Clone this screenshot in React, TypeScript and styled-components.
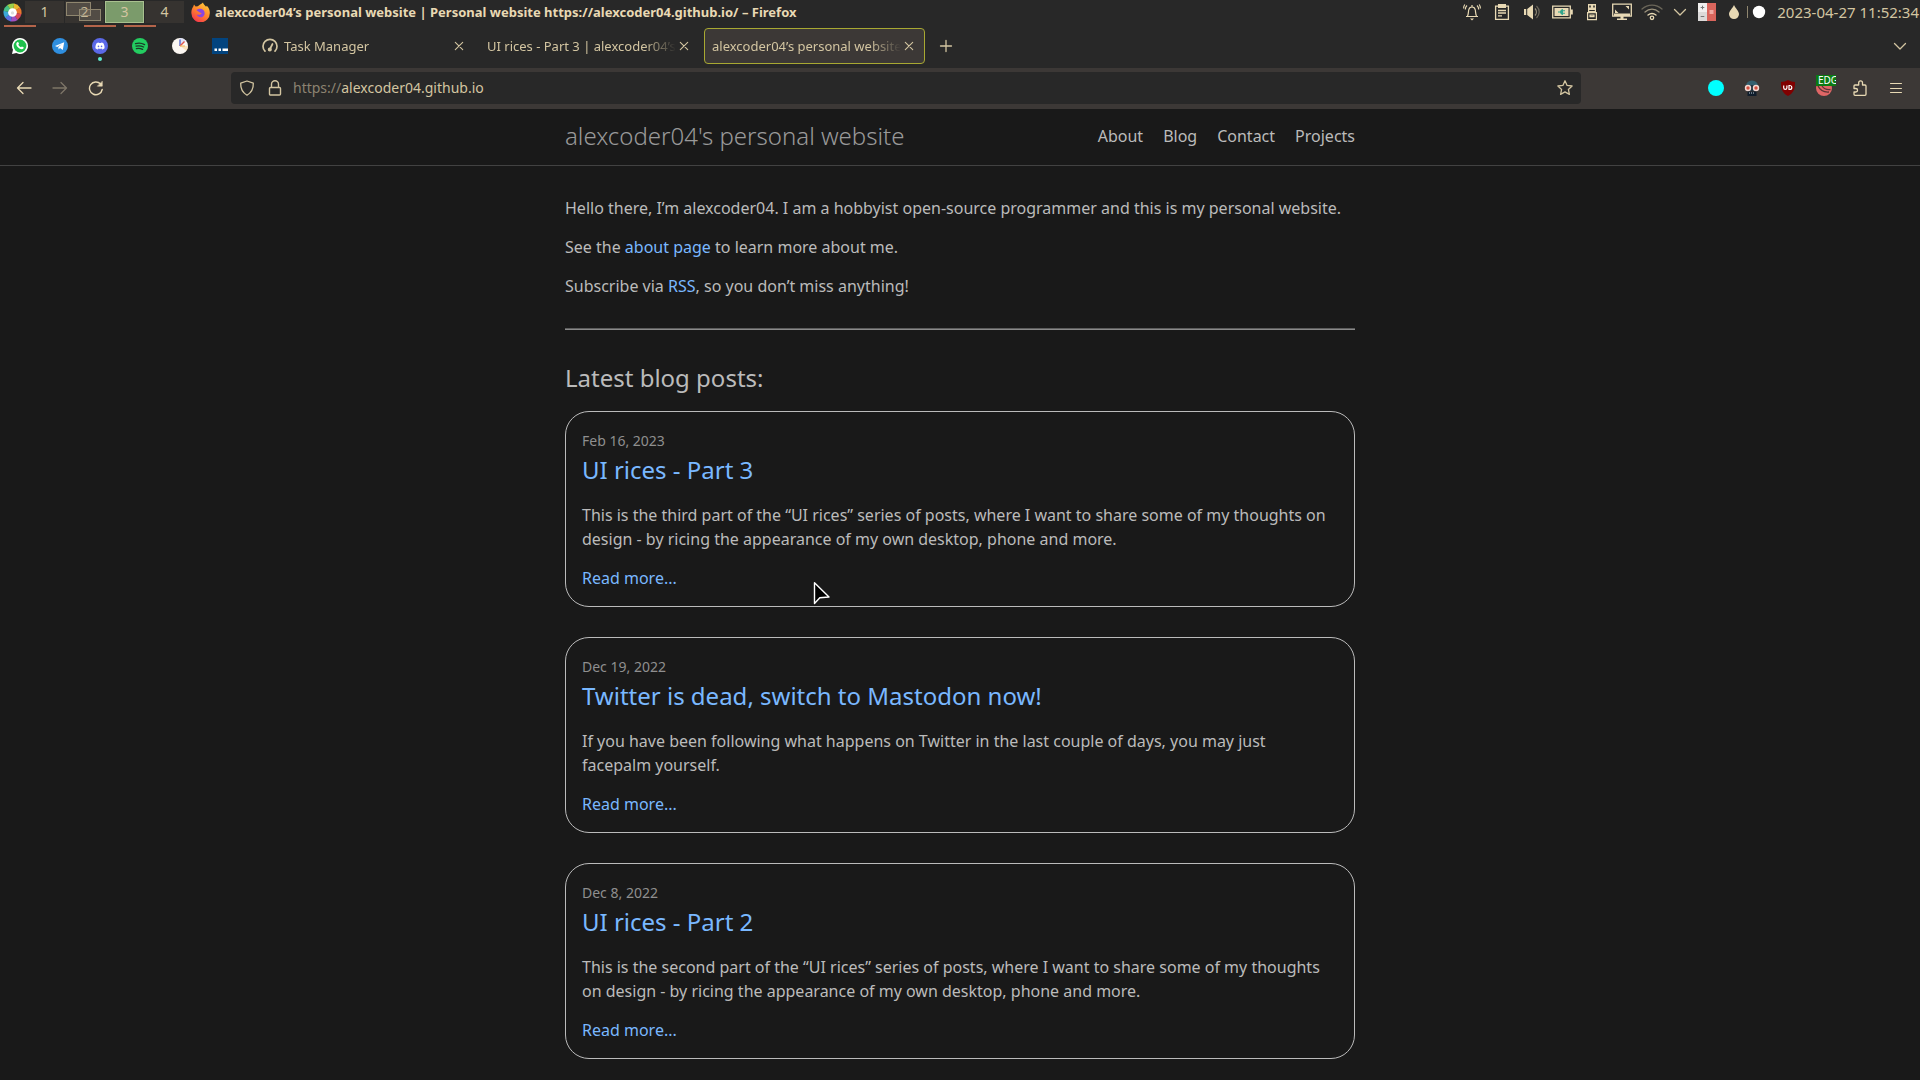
import React from "react";
import styled, { createGlobalStyle } from "styled-components";
import { FaDiscord } from "react-icons/fa";

const cream = "#e8d9b4";
const creamDim = "#d3c5a1";
const bar = "#282828";
const toolbar = "#3c3836";
const pageBg = "#191919";
const sans = `"Noto Sans", "Open Sans", sans-serif`;

const GlobalStyle = createGlobalStyle`
  *, *::before, *::after { box-sizing: border-box; }
  body { margin: 0; background: ${pageBg}; font-family: ${sans}; }
  button { font: inherit; color: inherit; background: none; border: 0; padding: 0; }
  svg { display: block; }
`;

const Desktop = styled.div`
  position: relative;
  display: flex;
  flex-direction: column;
  min-height: 100vh;
  overflow: hidden;
`;

/* ---------- desktop panel ---------- */
const Panel = styled.header`
  display: flex;
  align-items: center;
  height: 24px;
  background: ${bar};
  color: ${creamDim};
`;
const Launcher = styled.button`
  width: 25px;
  padding-left: 3px;
`;
const Pager = styled.nav`
  display: flex;
  gap: 1px;
`;
const Workspace = styled.button<{ $active?: boolean }>`
  position: relative;
  width: 39px;
  height: 22px;
  background: ${(p) => (p.$active ? "#7b9b6b" : "#363330")};
  box-shadow: ${(p) => (p.$active ? "inset 0 0 0 1px #a9c08f" : "none")};
  color: ${creamDim};
  font-size: 14px;
  line-height: 22px;
`;
const MiniWindow = styled.span<{ $x: number; $y: number; $w: number; $h: number }>`
  position: absolute;
  left: ${(p) => p.$x}px;
  top: ${(p) => p.$y}px;
  width: ${(p) => p.$w}px;
  height: ${(p) => p.$h}px;
  border: 1px solid #8f866f;
  background: rgba(168, 153, 132, 0.25);
`;
const ActiveWindow = styled.div`
  display: flex;
  flex: 1;
  align-items: center;
  gap: 5px;
  min-width: 0;
  padding-left: 7px;
  color: ${cream};
  font-size: 13px;
  font-weight: 700;
  white-space: nowrap;
`;
const Tray = styled.div`
  display: flex;
  align-items: center;
`;
const TrayButton = styled.button<{ $w?: number }>`
  display: flex;
  justify-content: center;
  width: ${(p) => p.$w ?? 30}px;
`;
const Divider = styled.span`
  width: 1px;
  height: 12px;
  background: #8f866f;
`;
const Clock = styled.time`
  width: 150px;
  padding-right: 1px;
  font-size: 15px;
  line-height: 24px;
  text-align: right;
  white-space: nowrap;
`;

/* ---------- browser tabs ---------- */
const TabStrip = styled.div`
  display: flex;
  align-items: stretch;
  height: 44px;
  background: ${bar};
  color: ${creamDim};
`;
const PinnedTabs = styled.div`
  display: flex;
  margin-right: 12px;
`;
const PinnedTab = styled.button<{ $container?: boolean }>`
  position: relative;
  display: flex;
  align-items: center;
  justify-content: center;
  width: 40px;
  &::before {
    content: "";
    position: absolute;
    top: 1px;
    left: 4px;
    right: 4px;
    height: 2px;
    background: ${(p) => (p.$container ? "#b4644a" : "transparent")};
  }
`;
const Notice = styled.span`
  position: absolute;
  bottom: 7px;
  left: 18px;
  width: 4px;
  height: 4px;
  border-radius: 2px;
  background: #5eead0;
`;
const Tab = styled.div<{ $active?: boolean }>`
  display: flex;
  align-items: center;
  width: 221px;
  margin: 4px 2px;
  padding: 0 7px;
  border: 1px solid ${(p) => (p.$active ? "#a8a832" : "transparent")};
  border-radius: 4px;
  background: ${(p) => (p.$active ? toolbar : "transparent")};
`;
const TabIcon = styled.span`
  width: 22px;
`;
const TabTitle = styled.button`
  flex: 1;
  min-width: 0;
  overflow: hidden;
  text-align: left;
  white-space: nowrap;
  font-size: 13px;
  line-height: 20px;
  mask-image: linear-gradient(to left, transparent, black 32px);
`;
const IconButton = styled.button<{ $w?: number }>`
  display: flex;
  align-items: center;
  justify-content: center;
  width: ${(p) => p.$w ?? 16}px;
`;
const Spacer = styled.span`
  flex: 1;
`;

/* ---------- navigation toolbar ---------- */
const NavBar = styled.div`
  display: flex;
  align-items: center;
  height: 41px;
  padding: 0 6px 1px;
  background: ${toolbar};
  color: ${cream};
`;
const NavSide = styled.div<{ $end?: boolean }>`
  display: flex;
  flex: ${(p) => (p.$end ? "0 0 333px" : "0 0 225px")};
  justify-content: ${(p) => (p.$end ? "flex-end" : "flex-start")};
`;
const UrlBar = styled.div`
  display: flex;
  flex: 1;
  align-items: center;
  height: 32px;
  padding-left: 2px;
  border-radius: 4px;
  background: ${bar};
  color: ${creamDim};
`;
const UrlField = styled.label`
  position: relative;
  flex: 1;
  margin-left: 4px;
  font-size: 14px;
  line-height: 24px;
`;
const UrlInput = styled.input`
  display: block;
  width: 100%;
  padding: 0;
  border: 0;
  outline: 0;
  background: none;
  color: transparent;
  font: inherit;
`;
const UrlText = styled.span`
  position: absolute;
  inset: 0;
  pointer-events: none;
`;
const Scheme = styled.span`
  color: #8c8371;
`;
const AddonBadge = styled.span`
  position: absolute;
  top: -5px;
  left: 0;
  width: 20px;
  height: 11px;
  overflow: hidden;
  padding-left: 2px;
  background: #0b7a12;
  color: #fff;
  font-size: 10px;
  line-height: 11px;
  text-align: left;
`;
const AddonWrap = styled.span`
  position: relative;
  width: 16px;
`;

/* ---------- web page ---------- */
const Page = styled.div`
  flex: 1;
  background: ${pageBg};
  color: #bbb;
  font-size: 16px;
  line-height: 24px;
`;
const SiteHeader = styled.header`
  border-bottom: 1px solid #424242;
`;
const Wrapper = styled.div`
  width: 100%;
  max-width: 850px;
  margin: 0 auto;
  padding: 0 30px;
`;
const HeaderRow = styled(Wrapper)`
  display: flex;
  align-items: center;
  justify-content: space-between;
  height: 56px;
  padding-bottom: 2px;
`;
const SiteTitle = styled.a`
  color: #999;
  font-size: 24px;
  font-weight: 300;
  line-height: 54px;
  text-decoration: none;
`;
const SiteNav = styled.nav`
  display: flex;
  gap: 20px;
  a { color: #bbb; text-decoration: none; }
`;
const Content = styled(Wrapper)`
  padding-top: 30px;
`;
const Para = styled.p`
  margin: 0 0 15px;
`;
const Link = styled.a`
  color: #79b8ff;
  text-decoration: none;
`;
const Rule = styled.hr`
  height: 2px;
  margin: 30px 0;
  border: 0;
  background: linear-gradient(#5c5c5c 50%, #8a8a8a 50%);
`;
const Heading = styled.h2`
  margin: 0 0 15px;
  font-size: 24px;
  font-weight: 400;
  line-height: 36px;
`;
const Posts = styled.ul`
  display: flex;
  flex-direction: column;
  gap: 30px;
  margin: 0;
  padding: 0;
  list-style: none;
`;
const Card = styled.li`
  padding: 16px;
  border: 1px solid #bbb;
  border-radius: 24px;
`;
const PostMeta = styled.div`
  color: #8f8f8f;
  time { font-size: 14px; line-height: 16px; }
`;
const PostTitle = styled.h3`
  margin: 0 0 15px;
  font-size: 24px;
  font-weight: 400;
  line-height: 36px;
`;
const Cursor = styled.svg`
  position: absolute;
  left: 813px;
  top: 581px;
`;

/* ---------- icons ---------- */
type IconProps = { size?: number; children: React.ReactNode; width?: number };
const Line = ({ size = 16, children, width = 1.3 }: IconProps) => (
  <svg width={size} height={size} viewBox="0 0 16 16" fill="none" stroke="currentColor"
    strokeWidth={width} strokeLinecap="round" strokeLinejoin="round" aria-hidden="true">
    {children}
  </svg>
);
const Close = () => <Line size={16} width={1.1}><path d="M4.3 4.3l7.4 7.4M11.7 4.3l-7.4 7.4" /></Line>;
const Chevron = () => <Line><path d="M2.5 5.5L8 11l5.5-5.500" /></Line>;

const LauncherIcon = () => {
  const colors = ["#e8b52f", "#e9772d", "#d9465b", "#a24fc0", "#5a6fe0", "#3aa8d8", "#46bf86", "#9ccf4a"];
  return (
    <svg width="19" height="19" viewBox="-10 -10 20 20" aria-hidden="true">
      {colors.map((c, i) => (
        <path key={c} d="M0 0L0-9.5A9.5 9.5 0 0 1 6.9-6.6Z" fill={c} transform={`rotate(${i * 45 + 10})`} />
      ))}
      <circle r="4.6" fill="#fff" />
      <circle r="1.7" cy="0.5" fill="#ddd" />
    </svg>
  );
};
const FirefoxIcon = () => (
  <svg width="19" height="20" viewBox="0 0 19 20" aria-hidden="true">
    <defs>
      <linearGradient id="fox" x1="0.8" y1="0" x2="0.2" y2="1">
        <stop offset="0" stopColor="#ffcf3d" />
        <stop offset="0.45" stopColor="#ff8a2b" />
        <stop offset="1" stopColor="#f5304e" />
      </linearGradient>
    </defs>
    <path d="M12 .5c.3 2 2 2.700 3.100 4.200l.7-.9C18 5.800 18.900 8.300 18.800 11A9.200 9.200 0 0 1 .4 11.300C.2 8.500 1 6.300 2.300 4.500l.7-2 1.600 2 2.200-.2C8 3 10 2.300 12 .5z" fill="url(#fox)" />
    <path d="M5.500 8.200C7 6.800 10 6 12.500 8.300c1.800 2 1.400 5.200-.7 6.400-2.400 1.300-5.300.2-6-2l3 .1 2-1.300-2.400-1.200z" fill="#8a45e0" />
  </svg>
);

const TrayIcons = {
  bell: (
    <svg width="18" height="18" viewBox="0 0 18 18" fill="none" stroke={cream} strokeWidth="1.200">
      <path d="M3 13.500h12M4.500 13c1-1.500.8-4 1.200-6C6.100 5 7.300 4 9 4s2.900 1 3.300 3c.4 2 .2 4.500 1.200 6M9 2v2M4 2.500C2.800 3.500 2.300 5 2.300 6.500M1.800 1.500C.8 2.800.6 4 .6 5.500M14 2.500c1.200 1 1.700 2.500 1.700 4M16.200 1.500c1 1.300 1.200 2.500 1.200 4" />
      <path d="M7 15.500h4L9 17.500z" fill={cream} stroke="none" />
    </svg>
  ),
  clipboard: (
    <svg width="16" height="18" viewBox="0 0 16 18" fill="none" stroke={cream} strokeWidth="1.300">
      <path d="M4 3.200H1.600v13.200h12.800V3.200H12M4 7.500h8M4 10h8M4 12.800h4" />
      <path d="M4 1h8v4H4z" fill={cream} stroke="none" />
    </svg>
  ),
  volume: (
    <svg width="18" height="18" viewBox="0 0 18 18" fill="none">
      <path d="M1 6h2.200v6H1zM4.200 6L10 1.500v15L4.200 12z" fill={cream} />
      <path d="M12 5.500c1.800 2 1.800 5 0 7" stroke={cream} strokeWidth="1.200" opacity=".6" />
      <path d="M13.500 3c3.600 3.500 3.600 8.500 0 12" stroke={cream} strokeWidth="1.200" opacity=".35" />
    </svg>
  ),
  battery: (
    <svg width="21" height="14" viewBox="0 0 21 14">
      <path d="M.7 1.200h17.600v11.600H.7z" fill="none" stroke={cream} strokeWidth="1.300" />
      <path d="M2.500 3h14v8h-14z" fill={cream} />
      <path d="M19 4.500h1.800v5H19z" fill={cream} />
      <path d="M6 6.400h2C8.500 5 9.500 4.200 11 4v1.300h2v1h-2v1.400h2v1h-2V10C9.500 9.800 8.500 9 8 7.600H6z" fill="#2fa58c" />
    </svg>
  ),
  usb: (
    <svg width="12" height="18" viewBox="0 0 12 18" fill="none" stroke={cream} strokeWidth="1.200">
      <path d="M2 1h8v6H2z" fill={cream} stroke="none" />
      <path d="M4 2.500v2M8 2.500v2" stroke={bar} strokeWidth="1.500" />
      <path d="M2.600 6v2.500h6.800V6M1.600 9.600h8.800v7H1.600zM4 12.200h4v1.500H4z" />
    </svg>
  ),
  monitor: (
    <svg width="20" height="18" viewBox="0 0 20 18">
      <path d="M.7 1.200h18.600v12H.7z" fill="none" stroke={cream} strokeWidth="1.300" />
      <path d="M2 10.500h16V13H2zM8.500 13h3v2.500h-3zM5 15.500h10V17H5zM13.500 3H17v3.500zM3 6.500L6.500 10H3z" fill={cream} />
    </svg>
  ),
  wifi: (
    <svg width="22" height="18" viewBox="0 0 22 18" fill="none" stroke={cream} strokeWidth="1.300" strokeLinecap="round">
      <path d="M1 6c5.800-5.300 14.200-5.300 20 0" opacity=".35" />
      <path d="M4 9c4.200-3.800 9.800-3.800 14 0" opacity=".6" />
      <path d="M7 12c2.600-2 5.400-2 8 0" />
      <circle cx="11" cy="14.800" r="1.700" />
    </svg>
  ),
  keyboard: (
    <svg width="18" height="18" viewBox="0 0 18 18">
      <path d="M0 0h9v9H0z" fill="#f1efee" /><path d="M0 9h9v9H0z" fill="#dcdad9" />
      <path d="M9 0h9v18H9z" fill="#d9655c" />
      <path d="M2.700 4.500h3.600M4.500 2.700v3.600M2.700 13.500h3.600" stroke="#777" />
      <path d="M11.500 7h4v4h-4z" fill="#f0a9a2" />
    </svg>
  ),
  drop: (
    <svg width="12" height="16" viewBox="0 0 12 16">
      <path d="M6 1c1.500 3.500 5 6 5 9.300A4.900 4.900 0 0 1 6 15a4.900 4.900 0 0 1-5-4.700C1 7 4.500 4.500 6 1z" fill={cream} />
    </svg>
  ),
  dot: <svg width="14" height="14" viewBox="0 0 14 14"><circle cx="7" cy="7" r="6.200" fill="#fff" /></svg>,
};

const tray: { name: string; icon: React.ReactNode; w?: number }[] = [
  { name: "Notifications", icon: TrayIcons.bell },
  { name: "Clipboard", icon: TrayIcons.clipboard },
  { name: "Volume", icon: TrayIcons.volume },
  { name: "Battery", icon: TrayIcons.battery },
  { name: "Removable devices", icon: TrayIcons.usb },
  { name: "Display", icon: TrayIcons.monitor },
  { name: "Network", icon: TrayIcons.wifi },
  { name: "Show hidden icons", icon: <Chevron />, w: 26 },
  { name: "Keyboard", icon: TrayIcons.keyboard, w: 28 },
  { name: "Night colour", icon: TrayIcons.drop, w: 26 },
];

const WhatsApp = () => (
  <svg width="16" height="16" viewBox="0 0 16 16" aria-hidden="true">
    <path d="M8 0a8 8 0 1 1-3.700 15.100L0 16l1-4.200A8 8 0 0 1 8 0z" fill="#fff" />
    <circle cx="8" cy="8" r="6.400" fill="#1fc04d" />
    <path d="M5.300 4.200c.7-.4 1-.1 1.200.4l.5 1.200-.7 1c.6 1.200 1.400 1.900 2.700 2.500l.9-.9 1.700.8c.3 1.200-.6 2-1.800 2C7.200 11.100 4 8 4.300 5.700c.1-.7.500-1.200 1-1.500z" fill="#fff" />
  </svg>
);
const Telegram = () => (
  <svg width="16" height="16" viewBox="0 0 16 16" aria-hidden="true">
    <circle cx="8" cy="8" r="8" fill="#2f8fe0" />
    <path d="M3 8l9.200-3.700L10.800 12 8 10l-1.400 1.400-.3-2.300L10 6 5.200 8.900z" fill="#fff" />
  </svg>
);
const Discord = () => (
  <svg width="16" height="16" viewBox="0 0 16 16" aria-hidden="true">
    <circle cx="8" cy="8" r="8" fill="#5b69e8" />
    <FaDiscord x="3" y="3" size={10} color="#fff" />
  </svg>
);
const Spotify = () => (
  <svg width="16" height="16" viewBox="0 0 16 16" aria-hidden="true">
    <circle cx="8" cy="8" r="8" fill="#23cc60" />
    <path d="M3.500 5.700c3-.9 6.300-.6 9.100.9M4 8.200c2.600-.7 5.200-.4 7.600.8M4.400 10.600c2.200-.5 4.300-.2 6.200.8" fill="none" stroke="#1b3a27" strokeWidth="1.300" strokeLinecap="round" />
  </svg>
);
const ClockPin = () => (
  <svg width="16" height="16" viewBox="0 0 16 16" aria-hidden="true">
    <circle cx="8" cy="8" r="8" fill="#fbf7f2" />
    <path d="M8 8V0a8 8 0 0 1 6 2.700z" fill="#dfe2f7" />
    <path d="M8 8l8 0a8 8 0 0 1-1.500 4.700z" fill="#fbe3bd" />
    <path d="M8 8V1.500" stroke="#4b62c8" strokeWidth="1.300" />
    <path d="M8 8l4.500-4.500" stroke="#e2574c" strokeWidth="1.400" />
    <path d="M8 8h5" stroke="#f0b95a" />
  </svg>
);
const DotsPin = () => (
  <svg width="16" height="16" viewBox="0 0 16 16" aria-hidden="true">
    <path d="M0 0h16v16H0z" fill="#02447f" />
    <path d="M2.500 10.500H5V13H2.500zM6.500 10.500H9V13H6.500zM10.500 10.500H16V13h-5.500z" fill="#fff" />
  </svg>
);
const pinned = [
  { name: "WhatsApp", icon: <WhatsApp />, container: true },
  { name: "Telegram", icon: <Telegram /> },
  { name: "Discord", icon: <Discord />, container: true, notice: true },
  { name: "Spotify", icon: <Spotify />, container: true },
  { name: "Clock", icon: <ClockPin /> },
  { name: "Portal", icon: <DotsPin /> },
];

const Gauge = () => (
  <Line width={1.700}>
    <path d="M3 13.200A7 7 0 1 1 13 13.200" />
    <path d="M8 11l2.500-5" />
    <circle cx="7.800" cy="11.500" r="1.200" fill="currentColor" />
  </Line>
);
const Spectre = () => (
  <svg width="16" height="16" viewBox="0 0 16 16" aria-hidden="true">
    <path d="M2 6a6 5.500 0 0 1 12 0z" fill="#35606f" />
    <path d="M3 5h10v6H3z" fill="#243642" />
    <circle cx="4" cy="8" r="3.200" fill="#f3d9d2" /><circle cx="12" cy="8" r="3.200" fill="#f3d9d2" />
    <circle cx="4" cy="8" r="1.700" fill="#d4503f" /><circle cx="12" cy="8" r="1.700" fill="#d4503f" />
    <path d="M3.500 11.500h9V16h-9z" fill="#101d2b" />
    <path d="M5 13h6" stroke="#b9cdd8" strokeDasharray="1 1" />
  </svg>
);
const Shield = () => (
  <svg width="16" height="16" viewBox="0 0 16 16" aria-hidden="true">
    <path d="M8 0c2 1.300 4.500 2 7 2 0 6-.5 10.500-7 14C1.500 12.500 1 8 1 2c2.500 0 5-.7 7-2z" fill="#800000" />
    <path d="M3.700 5.500v2.300a1.600 1.600 0 0 0 3.200 0V5.500M9 5.500v4h.8a2 2 0 0 0 0-4z" fill="none" stroke="#fff" strokeWidth="1.200" />
  </svg>
);
const Swirl = () => (
  <svg width="16" height="16" viewBox="0 0 16 16" aria-hidden="true">
    <circle cx="8" cy="8" r="8" fill="#e06666" />
    <path d="M2 6c2 4 5 6.500 11 6M6 6c2 3 4 4 8.500 3.500" fill="none" stroke="#5a3434" strokeWidth="1.300" />
  </svg>
);

const posts = [
  {
    date: "Feb 16, 2023",
    title: "UI rices - Part 3",
    text: "This is the third part of the “UI rices” series of posts, where I want to share some of my thoughts on design - by ricing the appearance of my own desktop, phone and more.",
  },
  {
    date: "Dec 19, 2022",
    title: "Twitter is dead, switch to Mastodon now!",
    text: "If you have been following what happens on Twitter in the last couple of days, you may just facepalm yourself.",
  },
  {
    date: "Dec 8, 2022",
    title: "UI rices - Part 2",
    text: "This is the second part of the “UI rices” series of posts, where I want to share some of my thoughts on design - by ricing the appearance of my own desktop, phone and more.",
  },
];

export default function App() {
  return (
    <Desktop>
      <GlobalStyle />
      <Panel>
        <Launcher aria-label="Applications"><LauncherIcon /></Launcher>
        <Pager aria-label="Workspaces">
          <Workspace>1</Workspace>
          <Workspace>
            2
            <MiniWindow $x={1} $y={1} $w={25} $h={14} />
            <MiniWindow $x={14} $y={8} $w={22} $h={12} />
          </Workspace>
          <Workspace $active>3</Workspace>
          <Workspace>4</Workspace>
        </Pager>
        <ActiveWindow>
          <FirefoxIcon />
          <span>alexcoder04’s personal website | Personal website https://alexcoder04.github.io/ – Firefox</span>
        </ActiveWindow>
        <Tray>
          {tray.map((t) => (
            <TrayButton key={t.name} aria-label={t.name} $w={t.w}>{t.icon}</TrayButton>
          ))}
          <Divider />
          <TrayButton aria-label="Record" $w={22}>{TrayIcons.dot}</TrayButton>
        </Tray>
        <Clock>2023-04-27 11:52:34</Clock>
      </Panel>

      <TabStrip>
        <PinnedTabs>
          {pinned.map((p) => (
            <PinnedTab key={p.name} aria-label={p.name} $container={p.container}>
              {p.icon}
              {p.notice && <Notice />}
            </PinnedTab>
          ))}
        </PinnedTabs>
        <Tab>
          <TabIcon><Gauge /></TabIcon>
          <TabTitle>Task Manager</TabTitle>
          <IconButton aria-label="Close tab"><Close /></IconButton>
        </Tab>
        <Tab>
          <TabTitle>UI rices - Part 3 | alexcoder04’s</TabTitle>
          <IconButton aria-label="Close tab"><Close /></IconButton>
        </Tab>
        <Tab $active>
          <TabTitle>alexcoder04’s personal website</TabTitle>
          <IconButton aria-label="Close tab"><Close /></IconButton>
        </Tab>
        <IconButton aria-label="New tab" $w={38}><Line><path d="M8 2.500v11M2.500 8h11" /></Line></IconButton>
        <Spacer />
        <IconButton aria-label="List all tabs" $w={40}><Chevron /></IconButton>
      </TabStrip>

      <NavBar>
        <NavSide>
          <IconButton aria-label="Back" $w={36}><Line><path d="M15 8H1.500M7 2.500L1.500 8 7 13.500" /></Line></IconButton>
          <IconButton aria-label="Forward" $w={36} disabled>
            <svg width="16" height="16" viewBox="0 0 16 16" fill="none" stroke="#7d7567" strokeWidth="1.300" strokeLinecap="round" strokeLinejoin="round">
              <path d="M1 8h13.500M9 2.500L14.500 8 9 13.500" />
            </svg>
          </IconButton>
          <IconButton aria-label="Reload" $w={36}>
            <Line width={1.400}>
              <path d="M14.200 9.500A6.400 6.400 0 1 1 12.600 4" />
              <path d="M14.300 1.500v4.700H9.600z" fill="currentColor" strokeWidth="0.500" />
            </Line>
          </IconButton>
        </NavSide>
        <UrlBar>
          <IconButton aria-label="Tracking protection" $w={28}>
            <Line><path d="M8 1l6.300 2.200c.2 5.300-1.800 9.300-6.300 12-4.500-2.700-6.500-6.700-6.300-12z" /></Line>
          </IconButton>
          <IconButton aria-label="Site information" $w={28}>
            <Line width={1.400}><path d="M3.500 7.500h9a1 1 0 0 1 1 1V14a1 1 0 0 1-1 1h-9a1 1 0 0 1-1-1V8.500a1 1 0 0 1 1-1zM4.500 7.500V4.300a3.500 3.500 0 0 1 7 0v3.200" /></Line>
          </IconButton>
          <UrlField>
            <UrlInput aria-label="Address" />
            <UrlText><Scheme>https://</Scheme>alexcoder04.github.io</UrlText>
          </UrlField>
          <IconButton aria-label="Bookmark this page" $w={32}>
            <Line><path d="M8 .8l2.100 4.600 5 .6-3.700 3.400 1 5L8 11.900l-4.400 2.500 1-5L.9 6l5-.6z" /></Line>
          </IconButton>
        </UrlBar>
        <NavSide $end>
          <IconButton aria-label="Container" $w={36}>
            <svg width="16" height="16" viewBox="0 0 16 16"><circle cx="8" cy="8" r="8" fill="#0ff" /></svg>
          </IconButton>
          <IconButton aria-label="Private mask" $w={36}><Spectre /></IconButton>
          <IconButton aria-label="Ad blocker" $w={36}><Shield /></IconButton>
          <IconButton aria-label="User agent" $w={36}>
            <AddonWrap><Swirl /><AddonBadge>EDG</AddonBadge></AddonWrap>
          </IconButton>
          <IconButton aria-label="Extensions" $w={36}>
            <Line><path d="M3 15.300h10a1 1 0 0 0 1-1V6a1 1 0 0 0-1-1h-2.500V2.700a1.900 1.900 0 0 0-3.800 0V5H3a1 1 0 0 0-1 1v2.500h1.800a1.700 1.700 0 0 1 0 3.500H2v2.300a1 1 0 0 0 1 1z" /></Line>
          </IconButton>
          <IconButton aria-label="Menu" $w={36}><Line width={1}><path d="M2.500 3.500h11M2.500 8.500h11M2.500 12.500h11" /></Line></IconButton>
        </NavSide>
      </NavBar>

      <Page>
        <SiteHeader>
          <HeaderRow>
            <SiteTitle href="#home">alexcoder04's personal website</SiteTitle>
            <SiteNav>
              <a href="#about">About</a>
              <a href="#blog">Blog</a>
              <a href="#contact">Contact</a>
              <a href="#projects">Projects</a>
            </SiteNav>
          </HeaderRow>
        </SiteHeader>
        <Content as="main">
          <Para>Hello there, I’m alexcoder04. I am a hobbyist open-source programmer and this is my personal website.</Para>
          <Para>See the <Link href="#about">about page</Link> to learn more about me.</Para>
          <Para>Subscribe via <Link href="#rss">RSS</Link>, so you don’t miss anything!</Para>
          <Rule />
          <Heading>Latest blog posts:</Heading>
          <Posts>
            {posts.map((p) => (
              <Card key={p.title}>
                <PostMeta><time>{p.date}</time></PostMeta>
                <PostTitle><Link href="#post">{p.title}</Link></PostTitle>
                <Para>{p.text}</Para>
                <Link href="#post">Read more...</Link>
              </Card>
            ))}
          </Posts>
        </Content>
      </Page>

      <Cursor width="18" height="25" viewBox="0 0 18 25" aria-hidden="true">
        <path d="M1.500 1.800v20.700l5.300-5.700 9.200-.8z" fill="#000" stroke="#fff" strokeWidth="1.400" strokeLinejoin="round" />
      </Cursor>
    </Desktop>
  );
}
